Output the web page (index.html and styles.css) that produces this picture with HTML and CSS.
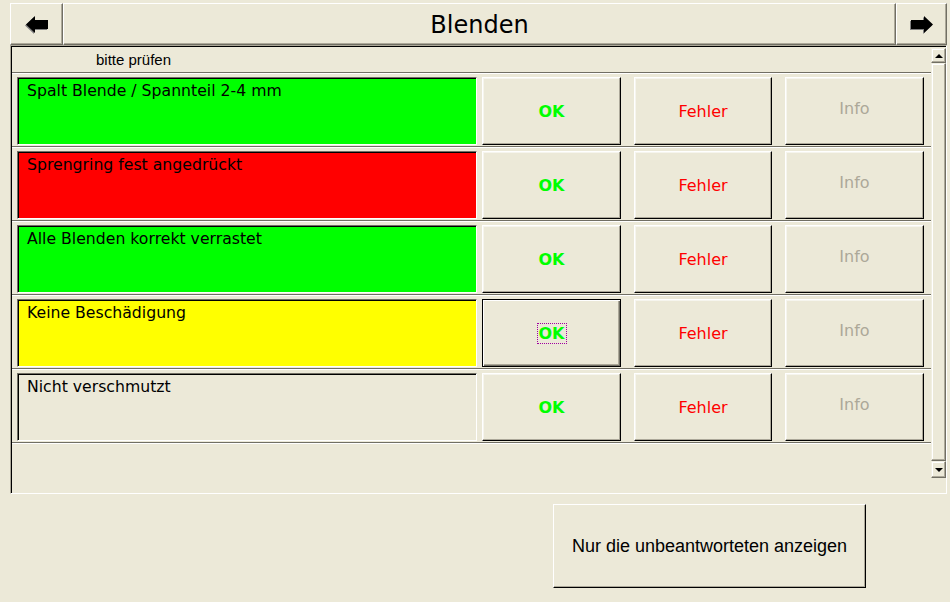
FILE: index.html
```html
<!DOCTYPE html>
<html lang="de">
<head>
<meta charset="utf-8">
<title>Blenden</title>
<link rel="stylesheet" href="styles.css">
</head>
<body>
<div class="app">
  <header class="header">
    <button class="nav-btn" type="button" aria-label="Zurück">
      <svg class="arrow" width="24" height="19" viewBox="-1 0 24 19">
        <path class="arrow-shadow" d="M0 9.5 L9 1 L9 5 L22 5 L22 14 L9 14 L9 18 Z" transform="translate(-1,1)"/>
        <path class="arrow-main" d="M0 9.5 L9 1 L9 5 L22 5 L22 14 L9 14 L9 18 Z"/>
      </svg>
    </button>
    <div class="title">Blenden</div>
    <button class="nav-btn" type="button" aria-label="Weiter">
      <svg class="arrow" width="24" height="19" viewBox="-1 0 24 19">
        <path class="arrow-shadow" d="M22 9.5 L13 1 L13 5 L0 5 L0 14 L13 14 L13 18 Z" transform="translate(-1,1)"/>
        <path class="arrow-main" d="M22 9.5 L13 1 L13 5 L0 5 L0 14 L13 14 L13 18 Z"/>
      </svg>
    </button>
  </header>

  <div class="panel">
    <div class="list">
      <div class="col-head">bitte prüfen</div>

      <div class="row">
        <div class="label green">Spalt Blende / Spannteil 2-4 mm</div>
        <button class="btn ok" type="button">OK</button>
        <button class="btn err" type="button">Fehler</button>
        <button class="btn info" type="button" disabled>Info</button>
      </div>

      <div class="row">
        <div class="label red">Sprengring fest angedrückt</div>
        <button class="btn ok" type="button">OK</button>
        <button class="btn err" type="button">Fehler</button>
        <button class="btn info" type="button" disabled>Info</button>
      </div>

      <div class="row">
        <div class="label green">Alle Blenden korrekt verrastet</div>
        <button class="btn ok" type="button">OK</button>
        <button class="btn err" type="button">Fehler</button>
        <button class="btn info" type="button" disabled>Info</button>
      </div>

      <div class="row">
        <div class="label yellow">Keine Beschädigung</div>
        <button class="btn ok focused" type="button"><span class="focus-ring">OK</span></button>
        <button class="btn err" type="button">Fehler</button>
        <button class="btn info" type="button" disabled>Info</button>
      </div>

      <div class="row">
        <div class="label">Nicht verschmutzt</div>
        <button class="btn ok" type="button">OK</button>
        <button class="btn err" type="button">Fehler</button>
        <button class="btn info" type="button" disabled>Info</button>
      </div>
    </div>

    <div class="scrollbar">
      <div class="sb-btn up"></div>
      <div class="sb-thumb"></div>
      <div class="sb-btn down"></div>
    </div>
  </div>

  <div class="footer">
    <button class="big-btn" type="button">Nur die unbeantworteten anzeigen</button>
  </div>
</div>
</body>
</html>
```

FILE: styles.css
```css
html, body {
  margin: 0;
  padding: 0;
}

body {
  background: #ECE9D8;
  width: 950px;
  height: 602px;
  overflow: hidden;
  font-family: "DejaVu Sans", Verdana, sans-serif;
  color: #000;
}

.app {
  width: 937px;
  padding-left: 10px;
}

button {
  font: inherit;
  margin: 0;
  padding: 0;
  background: #ECE9D8;
  -webkit-appearance: none;
  appearance: none;
  cursor: default;
}

/* ---------- header ---------- */
.header {
  display: flex;
  height: 42px;
  margin-top: 3px;
}

.nav-btn {
  box-sizing: border-box;
  width: 53px;
  height: 42px;
  display: flex;
  align-items: center;
  justify-content: center;
  border: 1px solid;
  border-color: #fff #716F64 #716F64 #fff;
  box-shadow: inset -1px -1px 0 #ACA899;
}

.nav-btn:last-child {
  width: 51px;
}

.arrow-main {
  fill: #000;
}

.arrow-shadow {
  fill: #808080;
}

.title {
  flex: 1;
  box-sizing: border-box;
  height: 42px;
  border: 1px solid;
  border-color: #fff #716F64 #716F64 #fff;
  box-shadow: inset -1px -1px 0 #ACA899;
  text-align: center;
  font-size: 24px;
  line-height: 40px;
  padding-top: 1px;
}

/* ---------- list panel ---------- */
.panel {
  box-sizing: border-box;
  height: 449px;
  display: flex;
  border: 1px solid;
  border-color: #ACA899 #fff #fff #ACA899;
  box-shadow: inset 1px 1px 0 #000;
  padding: 1px 0 0 1px;
}

.list {
  flex: 1;
  display: flex;
  flex-direction: column;
}

.col-head {
  box-sizing: border-box;
  height: 26px;
  border-bottom: 1px solid #716F64;
  box-shadow: 0 1px 0 #fff;
  padding-left: 84px;
  font-family: "Liberation Sans", Arial, sans-serif;
  font-size: 15px;
  line-height: 25px;
}

.row {
  box-sizing: border-box;
  height: 74px;
  display: flex;
  align-items: flex-start;
  padding: 4px 0 0 5px;
  border-bottom: 1px solid #716F64;
  box-shadow: 0 1px 0 #fff;
}

.label {
  box-sizing: border-box;
  width: 460px;
  height: 68px;
  border: 1px solid;
  border-color: #716F64 #fff #fff #716F64;
  box-shadow: inset 1px 1px 0 #000;
  padding: 3px 9px;
  font-size: 15.7px;
  line-height: 19px;
  white-space: nowrap;
}

.green { background: #00FF00; }
.red { background: #FF0000; }
.yellow { background: #FFFF00; }

.btn {
  box-sizing: border-box;
  width: 139px;
  height: 68px;
  margin-left: 13px;
  border: 1px solid;
  border-color: #fff #000 #000 #fff;
  box-shadow: inset -1px -1px 0 #ACA899, inset 1px 1px 0 #F6F5EE;
  font-size: 16px;
  line-height: 19px;
  display: flex;
  align-items: center;
  justify-content: center;
}

.btn.ok {
  margin-left: 5px;
  color: #00FF00;
  font-weight: bold;
}

.btn.err {
  width: 138px;
  color: #FF0000;
}

.btn.info {
  color: #ACA899;
  padding-bottom: 6px;
}

.btn.focused {
  border-color: #000;
  box-shadow: inset 1px 1px 0 #fff, inset -1px -1px 0 #716F64, inset -2px -2px 0 #ACA899;
}

.focus-ring {
  border: 1px dotted #a000a0;
  padding: 0 1px;
  line-height: 19px;
}

/* ---------- scrollbar ---------- */
.scrollbar {
  width: 15px;
  display: flex;
  flex-direction: column;
  padding-top: 1px;
}

.sb-btn,
.sb-thumb {
  box-sizing: border-box;
  border: 1px solid;
  border-color: #F1EFE2 #716F64 #716F64 #F1EFE2;
  box-shadow: inset -1px -1px 0 #ACA899, inset 1px 1px 0 #fff;
  background: #ECE9D8;
}

.sb-btn {
  height: 15px;
  display: flex;
  align-items: center;
  justify-content: center;
}

.sb-btn.up::after {
  content: "";
  border-left: 4px solid transparent;
  border-right: 4px solid transparent;
  border-bottom: 4px solid #000;
}

.sb-btn.down {
  height: 17px;
}

.sb-btn.down::after {
  content: "";
  border-left: 4px solid transparent;
  border-right: 4px solid transparent;
  border-top: 4px solid #000;
}

.sb-thumb {
  height: 398px;
}

/* ---------- footer ---------- */
.footer {
  display: flex;
  justify-content: flex-end;
  padding: 10px 81px 0 0;
}

.big-btn {
  box-sizing: border-box;
  width: 313px;
  height: 84px;
  border: 1px solid;
  border-color: #fff #000 #000 #fff;
  box-shadow: inset -1px -1px 0 #ACA899;
  font-family: "Liberation Sans", Arial, sans-serif;
  font-size: 18px;
  color: #000;
}
```
